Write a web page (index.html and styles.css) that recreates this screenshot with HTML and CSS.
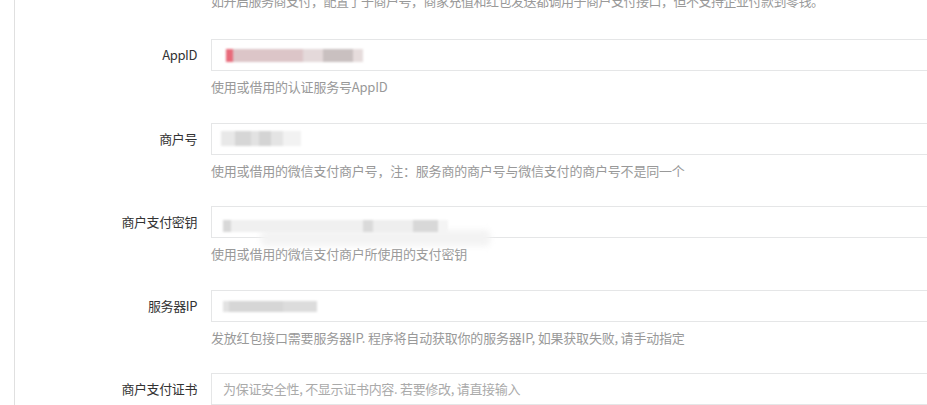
FILE: index.html
```html
<!DOCTYPE html>
<html lang="zh-CN">
<head>
    <meta charset="UTF-8">
    <meta name="viewport" content="width=device-width, initial-scale=1.0">
    <title>支付参数设置</title>
    <link rel="stylesheet" href="styles.css">
</head>
<body>
    <div class="panel">
        <div class="form-group first">
            <div class="spacer"></div>
            <div class="control">
                <div class="help">如开启服务商支付，配置了子商户号，商家充值和红包发送都调用子商户支付接口，但不支持企业付款到零钱。</div>
            </div>
        </div>

        <div class="form-group">
            <label class="label">AppID</label>
            <div class="control">
                <div class="field"><span class="mask mask-appid"></span></div>
                <div class="help">使用或借用的认证服务号AppID</div>
            </div>
        </div>

        <div class="form-group">
            <label class="label">商户号</label>
            <div class="control">
                <div class="field"><span class="mask mask-mchid"></span></div>
                <div class="help">使用或借用的微信支付商户号，注：服务商的商户号与微信支付的商户号不是同一个</div>
            </div>
        </div>

        <div class="form-group">
            <label class="label">商户支付密钥</label>
            <div class="control">
                <div class="field"><span class="mask mask-key"></span></div>
                <div class="help">使用或借用的微信支付商户所使用的支付密钥</div>
            </div>
        </div>

        <div class="form-group">
            <label class="label">服务器IP</label>
            <div class="control">
                <div class="field"><span class="mask mask-ip"></span></div>
                <div class="help">发放红包接口需要服务器IP. 程序将自动获取你的服务器IP, 如果获取失败, 请手动指定</div>
            </div>
        </div>

        <div class="form-group">
            <label class="label">商户支付证书</label>
            <div class="control">
                <div class="field placeholder">为保证安全性, 不显示证书内容. 若要修改, 请直接输入</div>
            </div>
        </div>
    </div>
</body>
</html>
```

FILE: styles.css
```css
html, body {
    margin: 0;
    height: 100%;
    overflow: hidden;
    background: #fff;
}

body {
    font-family: "Noto Sans CJK SC", "Liberation Sans", sans-serif;
    font-size: 13px;
    color: #333;
}

.panel {
    margin-left: 14px;
    border-left: 1px solid #e0e0e0;
    min-height: 100%;
    margin-top: -9px;
}

.form-group {
    display: grid;
    grid-template-columns: 182px 760px;
    column-gap: 14px;
    margin-bottom: 25.5px;
}

.form-group.first {
    margin-bottom: 28px;
}

.label {
    text-align: right;
    line-height: 32px;
    height: 32px;
    letter-spacing: -0.4px;
}

.field {
    height: 30px;
    border: 1px solid #e5e6e7;
    padding: 0 11px;
    line-height: 30px;
    display: flex;
    align-items: center;
}

.placeholder {
    color: #aaa;
    letter-spacing: -0.3px;
}

.help {
    color: #999;
    line-height: 20px;
    margin-top: 6px;
    white-space: nowrap;
    letter-spacing: -0.2px;
}

.first .help {
    margin-top: 0;
    letter-spacing: -0.5px;
}

.mask {
    display: block;
    height: 13px;
    filter: blur(1px);
}

.mask-appid {
    width: 140px;
    background: linear-gradient(90deg, #fff 0 3px, #e86a7a 3px 10px, #dcc5c8 10px 80px, #e4d9da 80px 100px, #c9c0c0 100px 130px, #e6dcdc 130px);
}

.mask-mchid {
    width: 80px;
    margin-left: -2px;
    height: 15px;
    background: linear-gradient(90deg, #e8e8e8 0 14px, #d6d6d6 14px 30px, #e2e2e2 30px 38px, #d4d4d4 38px 50px, #e4e4e4 50px 62px, #f2f2f2 62px);
}

.mask-key {
    width: 225px;
    height: 12px;
    margin-top: 8px;
    background: linear-gradient(90deg, #d8d8d8 0 8px, #f0f0f0 8px 140px, #dadada 140px 150px, #eee 150px 190px, #d8d8d8 190px 215px, #f4f4f4 215px);
    box-shadow: 40px 12px 6px 2px #f3f3f3;
}

.mask-ip {
    width: 94px;
    height: 11px;
    margin-top: 2px;
    background: linear-gradient(90deg, #e2e2e2 0 6px, #d6d6d6 6px 60px, #dcdcdc 60px);
}
```
